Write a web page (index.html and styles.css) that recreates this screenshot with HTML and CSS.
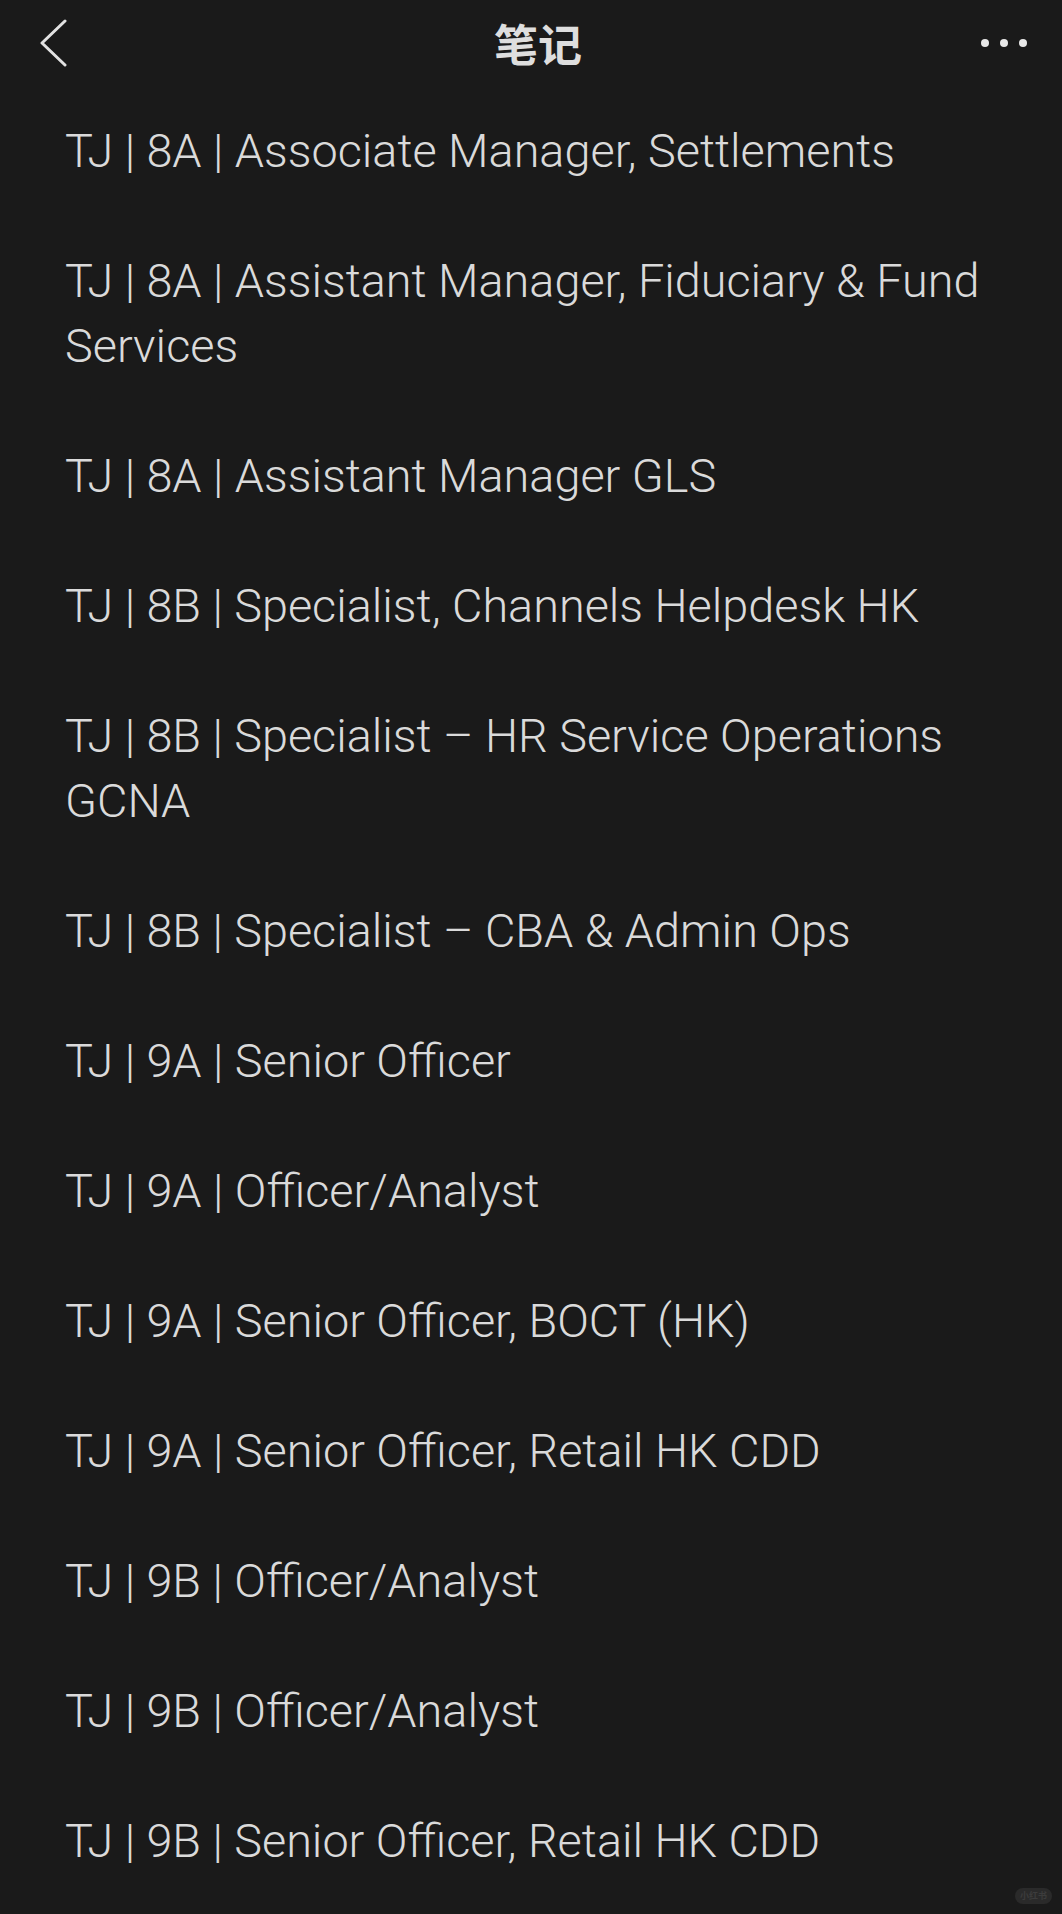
FILE: index.html
```html
<!DOCTYPE html>
<html lang="zh">
<head>
<meta charset="utf-8">
<link rel="stylesheet" href="styles.css">
</head>
<body>
<div class="page">
  <header class="topbar">
    <svg class="back" width="30" height="48" viewBox="0 0 30 48"><path d="M26 2 L3 24 L26 46" fill="none" stroke="#e2e2e2" stroke-width="3" stroke-linecap="round" stroke-linejoin="round"/></svg>
    <div class="title">笔记</div>
    <div class="more"><span></span><span></span><span></span></div>
  </header>
  <ul class="list">
    <li>TJ | 8A | Associate Manager, Settlements</li>
    <li>TJ | 8A | Assistant Manager, Fiduciary &amp; Fund Services</li>
    <li>TJ | 8A | Assistant Manager GLS</li>
    <li>TJ | 8B | Specialist, Channels Helpdesk HK</li>
    <li>TJ | 8B | Specialist – HR Service Operations GCNA</li>
    <li>TJ | 8B | Specialist – CBA &amp; Admin Ops</li>
    <li>TJ | 9A | Senior Officer</li>
    <li>TJ | 9A | Officer/Analyst</li>
    <li>TJ | 9A | Senior Officer, BOCT (HK)</li>
    <li>TJ | 9A | Senior Officer, Retail HK CDD</li>
    <li>TJ | 9B | Officer/Analyst</li>
    <li>TJ | 9B | Officer/Analyst</li>
    <li>TJ | 9B | Senior Officer, Retail HK CDD</li>
  </ul>
  <div class="mark">小红书</div>
</div>
</body>
</html>
```
FILE: styles.css
```css
* { box-sizing: border-box; }
html, body { margin: 0; padding: 0; background: #1a1a1a; }
.page {
  position: relative;
  width: 1062px;
  height: 1914px;
  overflow: hidden;
  background: #1a1a1a;
  font-family: "Roboto", "Noto Sans CJK SC", sans-serif;
  color: #dadada;
}
.topbar {
  height: 86px;
  display: grid;
  grid-template-columns: 1fr auto 1fr;
  align-items: center;
  padding: 0 35px 0 39px;
}
.back { display: block; justify-self: start; }
.title {
  font-family: "Noto Sans CJK SC", sans-serif;
  font-size: 44px;
  font-weight: 700;
  color: #dedede;
  line-height: 1;
  margin-left: 10px;
}
.more { display: flex; gap: 11px; align-items: center; justify-self: end; }
.more span { width: 8px; height: 8px; border-radius: 50%; background: #e8e8e8; }
.list {
  list-style: none;
  margin: 0;
  padding: 33px 65px 0 65px;
  display: flex;
  flex-direction: column;
  gap: 65px;
}
.list li {
  font-size: 46.8px;
  font-weight: 300;
  line-height: 65px;
}
.mark {
  position: absolute;
  right: 10px;
  bottom: 10px;
  padding: 1px 5px;
  border-radius: 9px;
  background: #2a2a2a;
  color: #3c3c3c;
  font-family: "Noto Sans CJK SC", sans-serif;
  font-size: 9px;
  line-height: 14px;
  font-weight: 700;
}
```
